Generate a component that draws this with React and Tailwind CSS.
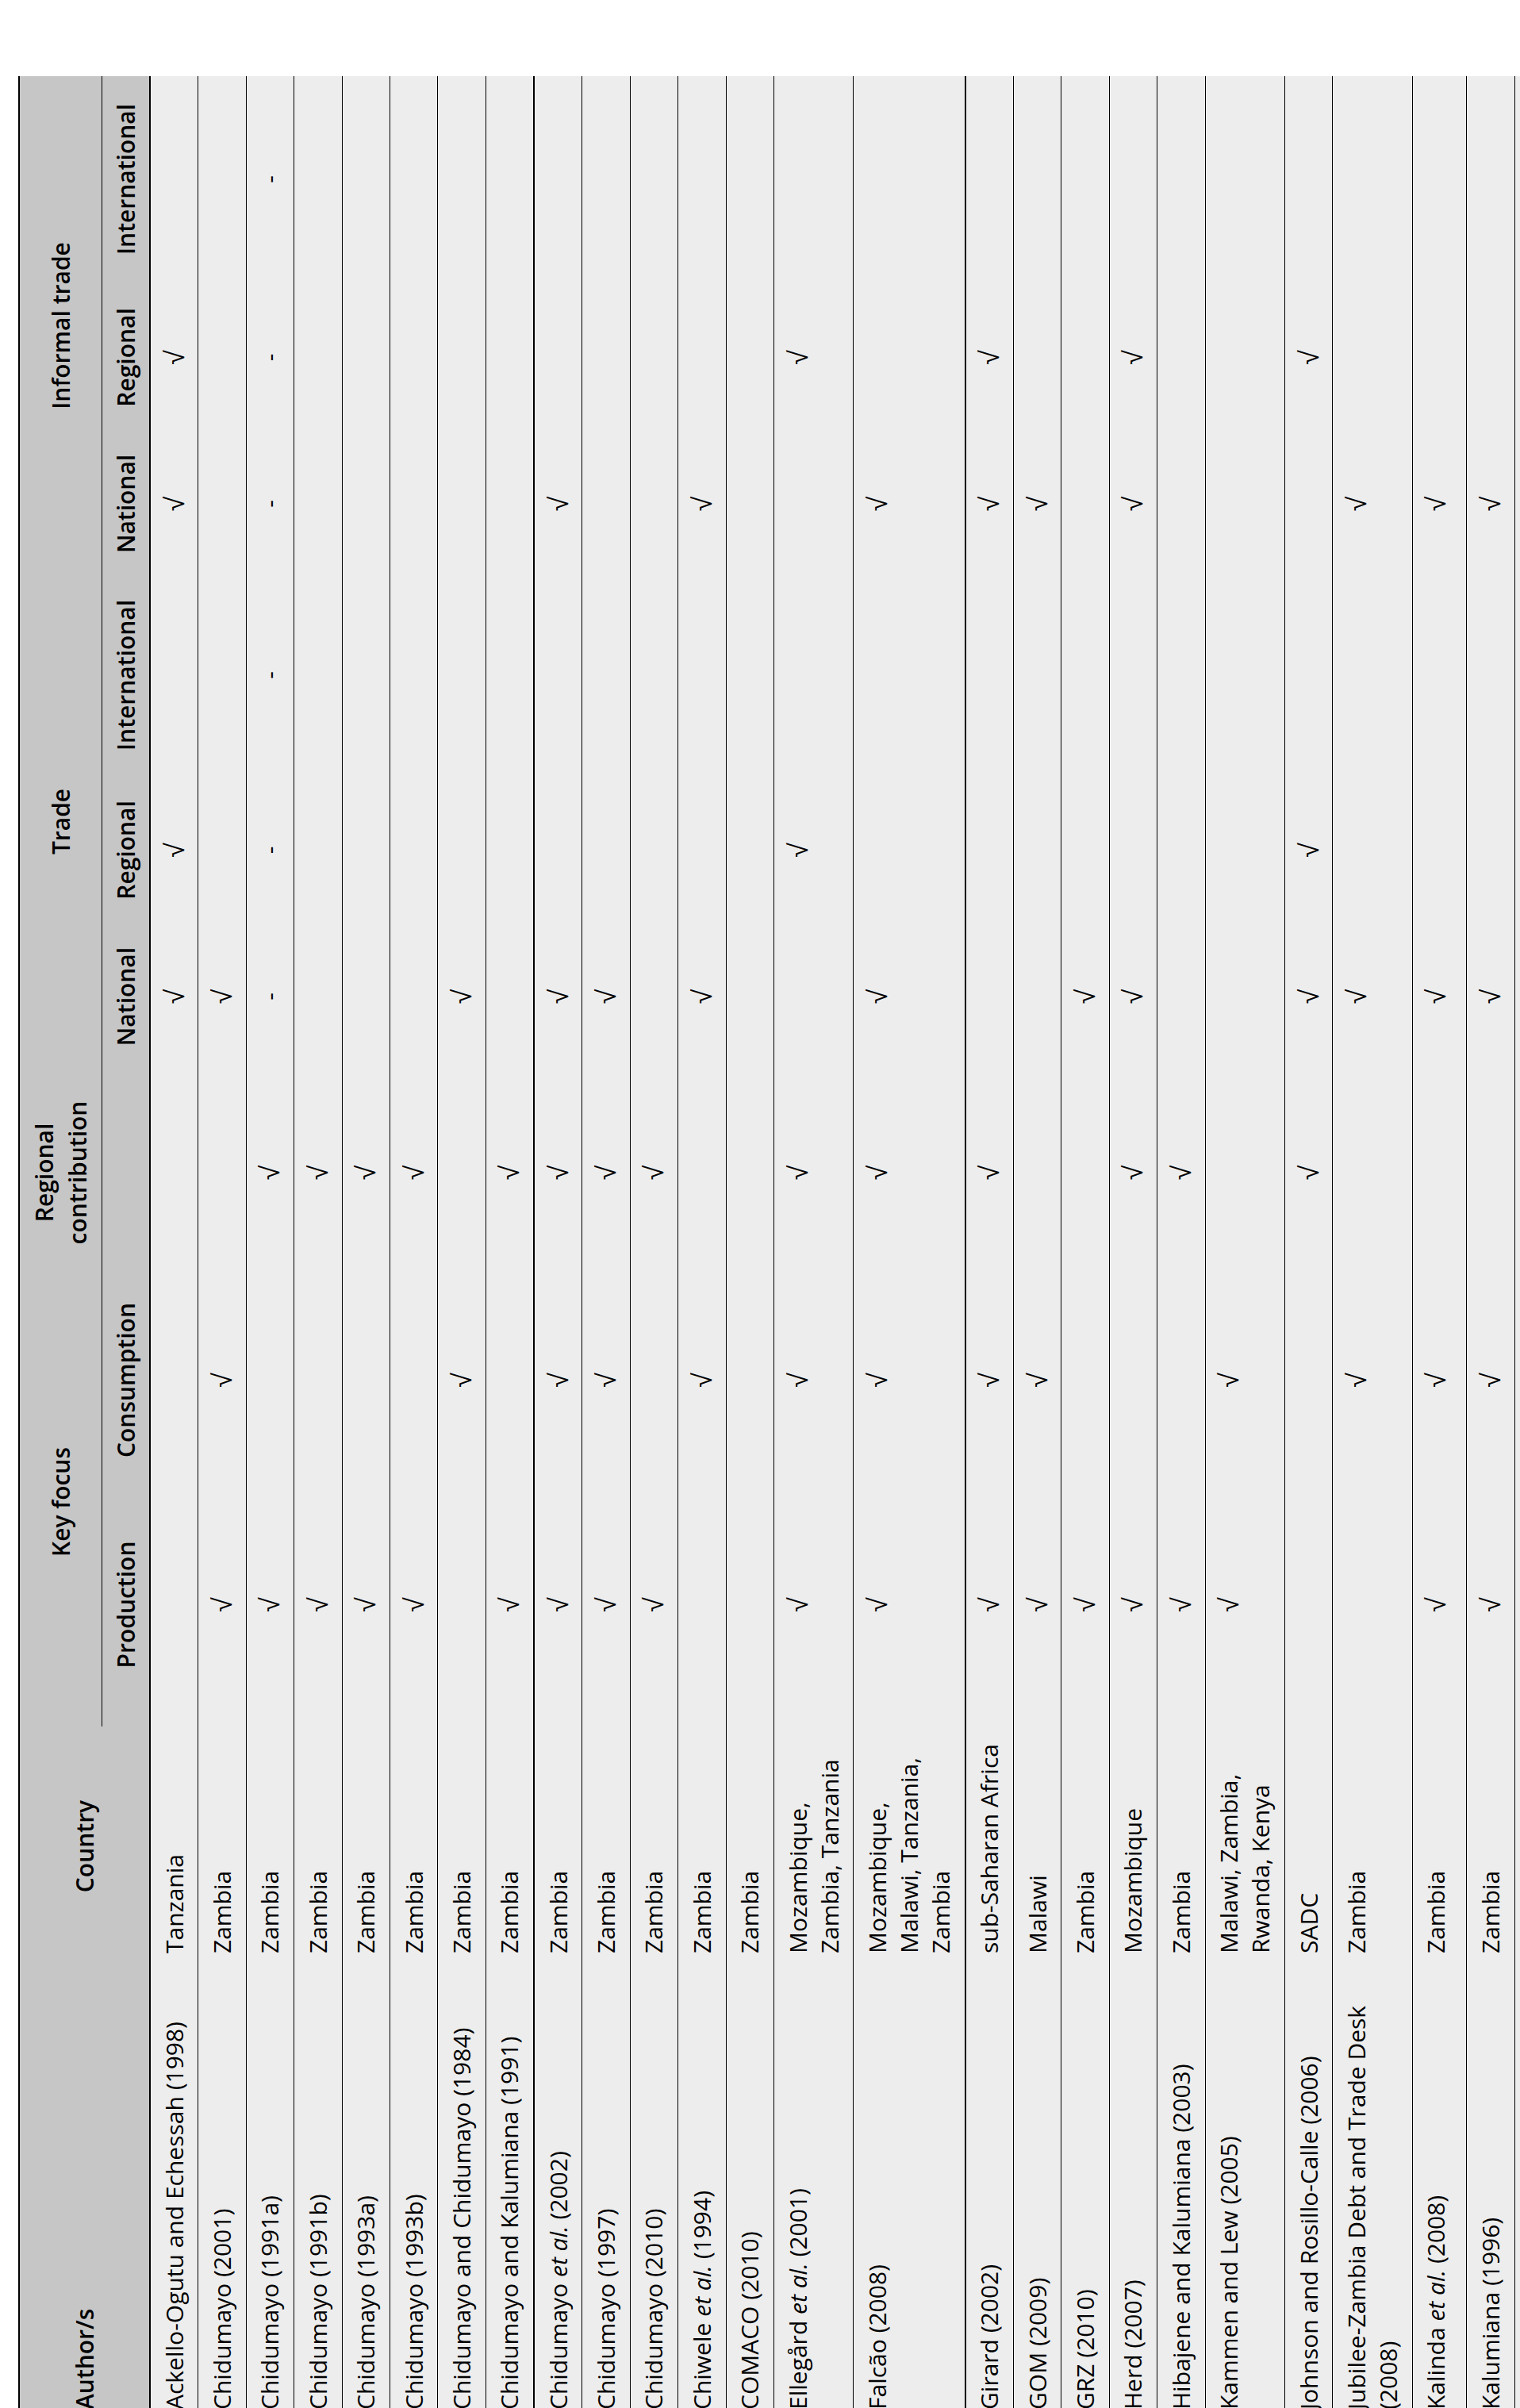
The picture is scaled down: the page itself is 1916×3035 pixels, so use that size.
import React from "react";

const Y = "√";
const D = "-";
const _ = "";

const rows = [
  { a: "Ackello-Ogutu and Echessah (1998)", c: "Tanzania", v: [_, _, _, Y, Y, _, Y, Y, _] },
  { a: "Chidumayo (2001)", c: "Zambia", v: [Y, Y, _, Y, _, _, _, _, _] },
  { a: "Chidumayo (1991a)", c: "Zambia", v: [Y, _, Y, D, D, D, D, D, D] },
  { a: "Chidumayo (1991b)", c: "Zambia", v: [Y, _, Y, _, _, _, _, _, _] },
  { a: "Chidumayo (1993a)", c: "Zambia", v: [Y, _, Y, _, _, _, _, _, _] },
  { a: "Chidumayo (1993b)", c: "Zambia", v: [Y, _, Y, _, _, _, _, _, _] },
  { a: "Chidumayo and Chidumayo (1984)", c: "Zambia", v: [_, Y, _, Y, _, _, _, _, _] },
  { a: "Chidumayo and Kalumiana (1991)", c: "Zambia", v: [Y, _, Y, _, _, _, _, _, _], thick: true },
  { a: <>Chidumayo <i>et al.</i> (2002)</>, c: "Zambia", v: [Y, Y, Y, Y, _, _, Y, _, _] },
  { a: "Chidumayo (1997)", c: "Zambia", v: [Y, Y, Y, Y, _, _, _, _, _] },
  { a: "Chidumayo (2010)", c: "Zambia", v: [Y, _, Y, _, _, _, _, _, _] },
  { a: <>Chiwele <i>et al.</i> (1994)</>, c: "Zambia", v: [_, Y, _, Y, _, _, Y, _, _] },
  { a: "COMACO (2010)", c: "Zambia", v: [_, _, _, _, _, _, _, _, _] },
  { a: <>Ellegård <i>et al.</i> (2001)</>, c: "Mozambique, Zambia, Tanzania", v: [Y, Y, Y, _, Y, _, _, Y, _] },
  { a: "Falcão (2008)", c: "Mozambique, Malawi, Tanzania, Zambia", v: [Y, Y, Y, Y, _, _, Y, _, _], thick: true },
  { a: "Girard (2002)", c: "sub-Saharan Africa", v: [Y, Y, Y, _, _, _, Y, Y, _] },
  { a: "GOM (2009)", c: "Malawi", v: [Y, Y, _, _, _, _, Y, _, _] },
  { a: "GRZ (2010)", c: "Zambia", v: [Y, _, _, Y, _, _, _, _, _] },
  { a: "Herd (2007)", c: "Mozambique", v: [Y, _, Y, Y, _, _, Y, Y, _] },
  { a: "Hibajene and Kalumiana (2003)", c: "Zambia", v: [Y, _, Y, _, _, _, _, _, _] },
  { a: "Kammen and Lew (2005)", c: "Malawi, Zambia, Rwanda, Kenya", v: [Y, Y, _, _, _, _, _, _, _] },
  { a: "Johnson and Rosillo-Calle (2006)", c: "SADC", v: [_, _, Y, Y, Y, _, _, Y, _] },
  { a: "Jubilee-Zambia Debt and Trade Desk (2008)", c: "Zambia", v: [_, Y, _, Y, _, _, Y, _, _] },
  { a: <>Kalinda <i>et al.</i> (2008)</>, c: "Zambia", v: [Y, Y, _, Y, _, _, Y, _, _], tall: true },
  { a: "Kalumiana (1996)", c: "Zambia", v: [Y, Y, _, Y, _, _, Y, _, _] },
];

function Mark({ v }) {
  if (v === Y) {
    return (
      <div className="flex h-[40px] items-center justify-center">
        <span className="font-['Liberation_Sans',sans-serif] text-[34px] leading-[40px]">√</span>
      </div>
    );
  }
  if (v === D) {
    return <div className="h-[40px] text-center leading-[40px]">-</div>;
  }
  return <div className="h-[40px]" />;
}

function BodyRow({ r }) {
  const b = r.thick ? "border-b-2" : "border-b";
  const pad = r.tall ? "pt-[9.7px] pb-[18px]" : "py-[9.7px]";
  const cell = `${b} border-black bg-[#ededed] align-top ${pad}`;
  return (
    <tr>
      <td className={`${cell} px-[16px] text-left leading-[40px]`}>{r.a}</td>
      <td className={`${cell} px-[16px] text-left leading-[40px]`}>{r.c}</td>
      {r.v.map((v, i) => (
        <td key={i} className={`${cell} text-center leading-[40px]`}>
          <Mark v={v} />
        </td>
      ))}
    </tr>
  );
}

export default function App() {
  const th1 = "border-t-2 border-b border-black bg-[#c6c6c6] text-center align-middle font-semibold leading-[40px]";
  const th2 = "border-b-2 border-black bg-[#c6c6c6] text-center align-middle font-semibold leading-[40px]";
  return (
    <div className="h-[3035px] w-[1916px] overflow-hidden bg-white">
      <div className="w-[2957px] origin-top-left [transform:translate(23px,3053px)_rotate(-90deg)]">
        <table className="w-[2957px] table-fixed border-separate border-spacing-0 font-['Open_Sans',sans-serif] text-[30px] text-black">
          <colgroup>
            <col className="w-[575px]" />
            <col className="w-[302px]" />
            <col className="w-[307px]" />
            <col className="w-[259px]" />
            <col className="w-[264px]" />
            <col className="w-[180px]" />
            <col className="w-[189px]" />
            <col className="w-[252px]" />
            <col className="w-[180px]" />
            <col className="w-[189px]" />
            <col className="w-[260px]" />
          </colgroup>
          <thead>
            <tr className="h-[106px]">
              <th
                rowSpan={2}
                className="border-t-2 border-b-2 border-black bg-[#c6c6c6] px-[16px] text-left align-middle font-semibold leading-[40px]"
              >
                Author/s
              </th>
              <th
                rowSpan={2}
                className="border-t-2 border-b-2 border-black bg-[#c6c6c6] px-[16px] text-center align-middle font-semibold leading-[40px]"
              >
                Country
              </th>
              <th colSpan={2} className={th1}>
                Key focus
              </th>
              <th className="border-t-2 border-b border-black bg-[#c6c6c6] text-center align-middle font-semibold leading-[42px]">
                Regional
                <br />
                contribution
              </th>
              <th colSpan={3} className={th1}>
                Trade
              </th>
              <th colSpan={3} className={th1}>
                Informal trade
              </th>
            </tr>
            <tr className="h-[61px]">
              <th className={th2}>Production</th>
              <th className={th2}>Consumption</th>
              <th className={th2}></th>
              <th className={th2}>National</th>
              <th className={th2}>Regional</th>
              <th className={th2}>International</th>
              <th className={th2}>National</th>
              <th className={th2}>Regional</th>
              <th className={th2}>International</th>
            </tr>
          </thead>
          <tbody>
            {rows.map((r, i) => (
              <BodyRow key={i} r={r} />
            ))}
            <tr>
              <td className="h-[61px] bg-[#ededed]" />
              <td className="bg-[#ededed]" />
              <td className="bg-[#ededed]" />
              <td className="bg-[#ededed]" />
              <td className="bg-[#ededed]" />
              <td className="bg-[#ededed]" />
              <td className="bg-[#ededed]" />
              <td className="bg-[#ededed]" />
              <td className="bg-[#ededed]" />
              <td className="bg-[#ededed]" />
              <td className="bg-[#ededed]" />
            </tr>
          </tbody>
        </table>
      </div>
    </div>
  );
}
